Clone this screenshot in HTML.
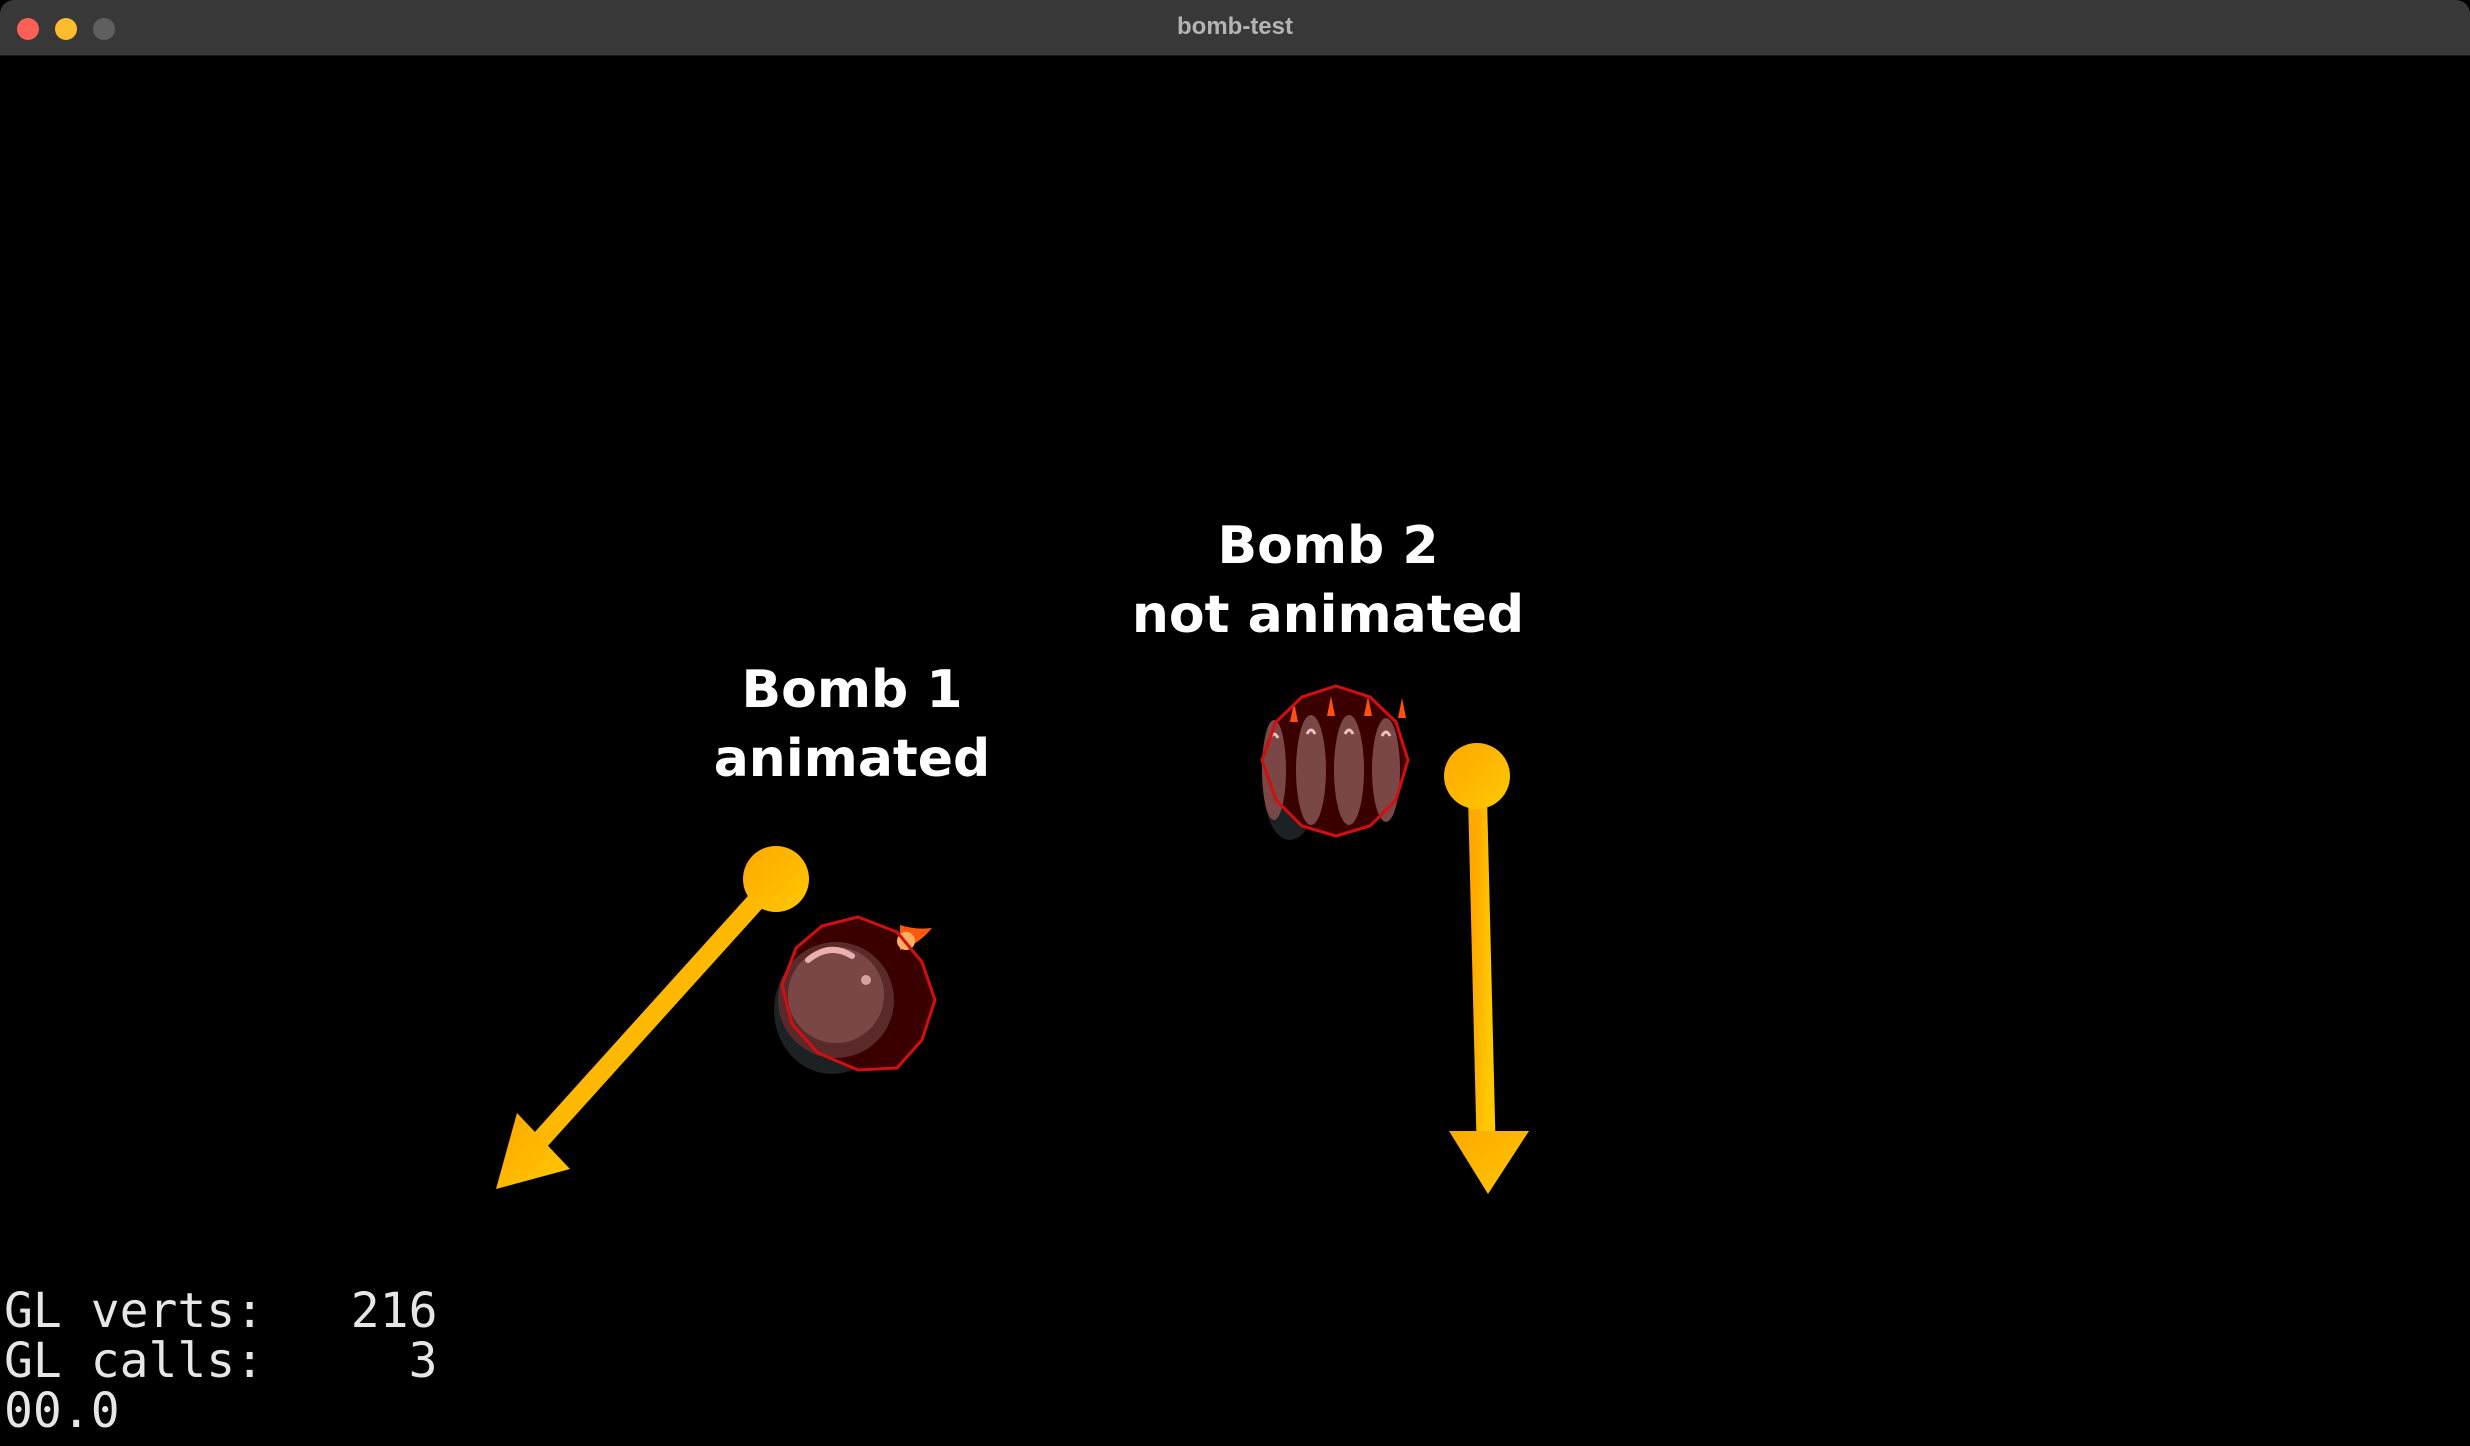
<!DOCTYPE html>
<html><head><meta charset="utf-8"><style>
html,body{margin:0;padding:0;background:#000;width:2470px;height:1446px;overflow:hidden}
#tb{position:absolute;left:0;top:0;width:2470px;height:55px;background:#383838;border-bottom:1px solid #1a1a1a;border-radius:14px 14px 0 0}
.dot{position:absolute;top:18px;width:22px;height:22px;border-radius:50%}
#title{position:absolute;left:0;width:2470px;top:13px;text-align:center;font:bold 24px "Liberation Sans",sans-serif;color:#b4b4b4}
.lbl{position:absolute;text-align:center;font:bold 52px/69px "DejaVu Sans","Liberation Sans",sans-serif;color:#fff;white-space:nowrap}
#stats{position:absolute;left:4px;top:1286px;font:48px/50px "DejaVu Sans Mono","Liberation Mono",monospace;color:#e6e6e6;white-space:pre}
</style></head><body>
<div id="tb">
<div class="dot" style="left:17px;background:#fe5f57"></div>
<div class="dot" style="left:55px;background:#febc2e"></div>
<div class="dot" style="left:93px;background:#5f5f5f"></div>
<div id="title">bomb-test</div>
</div>
<div class="lbl" style="left:652px;width:400px;top:656px">Bomb 1<br>animated</div>
<div class="lbl" style="left:1078px;width:500px;top:512px">Bomb 2<br>not animated</div>
<svg width="2470" height="1446" style="position:absolute;left:0;top:0">
<defs>
<linearGradient id="g" x1="0" y1="0" x2="1" y2="1"><stop offset="0" stop-color="#ffa800"/><stop offset="1" stop-color="#ffc800"/></linearGradient>
</defs>
<!-- bomb 1 -->
<ellipse cx="832" cy="1010" rx="58" ry="64" fill="#1c2224"/>
<polygon points="858,917 897,932 922,962 935,1000 922,1040 897,1068 858,1070 818,1053 792,1024 782,985 796,948 822,926" fill="#3a0000"/>
<circle cx="836" cy="1000" r="58" fill="#5a2a2a"/>
<circle cx="836" cy="995" r="48" fill="#7a4646"/>
<path d="M808,960 Q830,942 852,956" stroke="#e8b0b0" stroke-width="6" fill="none" stroke-linecap="round"/>
<circle cx="866" cy="980" r="5" fill="#d8a0a0"/>
<path d="M900,925 Q915,930 932,928 Q918,945 900,950 Z" fill="#ff5a10"/>
<circle cx="906" cy="941" r="9" fill="#ffb060"/>
<polygon points="858,917 897,932 922,962 935,1000 922,1040 897,1068 858,1070 818,1053 792,1024 782,985 796,948 822,926" fill="none" stroke="#d01010" stroke-width="3"/>
<!-- bomb 2 -->
<ellipse cx="1290" cy="790" rx="26" ry="50" fill="#1c2224"/>
<polygon points="1336,686 1370,697 1396,722 1408,760 1396,800 1370,826 1336,836 1302,826 1276,800 1262,760 1276,722 1302,697" fill="#3a0000"/>
<g fill="#7a4646">
<ellipse cx="1274" cy="770" rx="12" ry="50"/><ellipse cx="1311" cy="770" rx="15" ry="55"/><ellipse cx="1349" cy="770" rx="15" ry="55"/><ellipse cx="1386" cy="770" rx="14" ry="52"/>
</g>
<g stroke="#f0c0c0" stroke-width="3" fill="none">
<path d="M1270,738 q4,-8 8,0"/><path d="M1307,734 q4,-8 8,0"/><path d="M1345,734 q4,-8 8,0"/><path d="M1382,736 q4,-8 8,0"/>
</g>
<g fill="#ff5010"><path d="M1290,722 l4,-20 l4,20z"/><path d="M1327,716 l4,-20 l4,20z"/><path d="M1364,716 l4,-20 l4,20z"/><path d="M1398,718 l4,-20 l4,20z"/></g>
<polygon points="1336,686 1370,697 1396,722 1408,760 1396,800 1370,826 1336,836 1302,826 1276,800 1262,760 1276,722 1302,697" fill="none" stroke="#d01010" stroke-width="3"/>
<!-- arrows -->
<line x1="776" y1="879" x2="535" y2="1146" stroke="url(#g)" stroke-width="19"/>
<polygon points="496,1189 570,1169 517,1113" fill="url(#g)"/>
<circle cx="776" cy="879" r="33" fill="url(#g)"/>
<line x1="1477" y1="776" x2="1486" y2="1140" stroke="url(#g)" stroke-width="19"/>
<polygon points="1488,1194 1449,1131 1529,1131" fill="url(#g)"/>
<circle cx="1477" cy="776" r="33" fill="url(#g)"/>
</svg>
<div id="stats">GL verts:   216
GL calls:     3
00.0</div>
</body></html>
